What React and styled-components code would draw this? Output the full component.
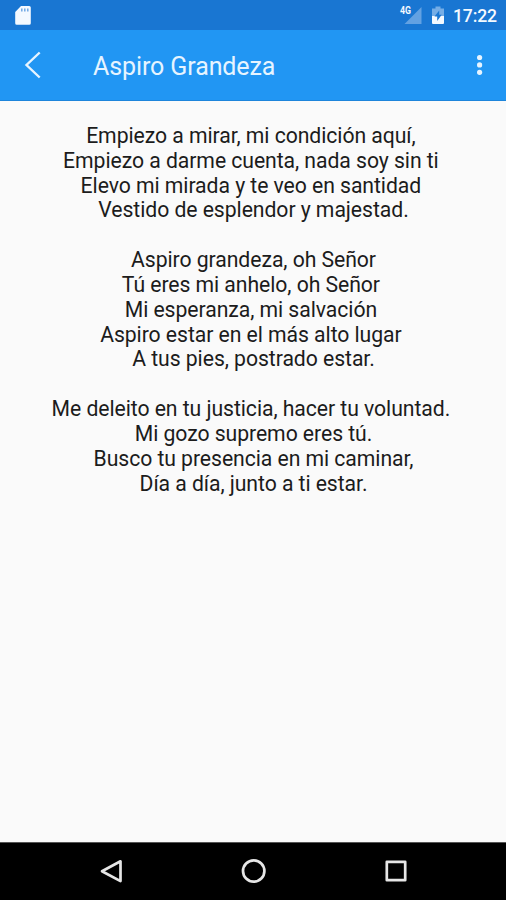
import React from 'react';
import styled, { createGlobalStyle } from 'styled-components';

const GlobalStyle = createGlobalStyle`
  body {
    margin: 0;
    background: #fafafa;
    font-family: Roboto, sans-serif;
  }
`;

const Screen = styled.div`
  display: flex;
  flex-direction: column;
  width: 506px;
  height: 900px;
  overflow: hidden;
  background: #fafafa;
`;

const StatusBar = styled.div`
  display: flex;
  justify-content: space-between;
  height: 30px;
  flex-shrink: 0;
  padding: 0 9px 0 14px;
  background: #1976d2;
  color: #f4f9ff;
`;

const StatusIcons = styled.div`
  display: flex;
`;

const Clock = styled.span`
  width: 44px;
  margin-left: 7px;
  font-size: 17.6px;
  font-weight: 500;
  letter-spacing: -0.15px;
  line-height: 32px;
  white-space: nowrap;
`;

const AppBar = styled.header`
  display: flex;
  align-items: center;
  height: 70px;
  flex-shrink: 0;
  padding: 0 16px 0 20px;
  background: #2196f3;
  border-bottom: 1px solid #1d85db;
  color: #e6f4ff;
`;

const Title = styled.h1`
  flex: 1;
  margin: 4px 0 0 47px;
  font-size: 25px;
  font-weight: 400;
  letter-spacing: -0.1px;
  line-height: 36px;
`;

const IconButton = styled.button`
  display: flex;
  padding: 0;
  border: 0;
  background: none;
  color: inherit;
`;

const Lyrics = styled.main`
  flex: 1;
  padding: 23px 0 0 1px;
  text-align: center;
`;

const Verse = styled.p`
  margin: 0 0 24.83px;
  color: #1c1c1c;
  font-size: 21.2px;
  letter-spacing: -0.06px;
  line-height: 24.83px;
`;

/* trailing spaces in the lyrics count towards the centering */
const Line = styled.span`
  display: block;
  white-space: pre;
`;

const NavBar = styled.nav`
  display: flex;
  justify-content: space-around;
  align-items: center;
  height: 58px;
  flex-shrink: 0;
  padding: 0 40px;
  box-sizing: border-box;
  border-top: 1px solid #555;
  background: #000;
  color: #e6e6e6;
`;

const verses = [
  [
    'Empiezo a mirar, mi condición aquí, ',
    'Empiezo a darme cuenta, nada soy sin ti ',
    'Elevo mi mirada y te veo en santidad ',
    'Vestido de esplendor y majestad.',
  ],
  [
    'Aspiro grandeza, oh Señor',
    'Tú eres mi anhelo, oh Señor ',
    'Mi esperanza, mi salvación ',
    'Aspiro estar en el más alto lugar ',
    'A tus pies, postrado estar.',
  ],
  [
    'Me deleito en tu justicia, hacer tu voluntad. ',
    'Mi gozo supremo eres tú.',
    'Busco tu presencia en mi caminar,',
    'Día a día, junto a ti estar.',
  ],
];

const SdCard = () => (
  <svg width="18" height="30" viewBox="0 0 18 30">
    <path
      d="M7 6h8.200a1.600 1.600 0 0 1 1.600 1.600v15.600a1.600 1.600 0 0 1-1.600 1.600H2.800a1.600 1.600 0 0 1-1.600-1.600V12z"
      fill="currentColor"
    />
    <path d="M7.800 8.500v3M10.800 8.500v3M13.800 8.500v3" stroke="#6fa8e4" strokeWidth="1.500" />
  </svg>
);

const Signal = () => (
  <svg width="23" height="30" viewBox="0 0 23 30">
    <path d="M22.500 7v17h-17z" fill="#63a1e2" />
    <text x="1" y="14" fontSize="10" fontWeight="700" fill="currentColor" textLength="11" lengthAdjust="spacingAndGlyphs">
      4G
    </text>
  </svg>
);

const Battery = () => (
  <svg width="24" height="30" viewBox="0 0 24 30">
    <path d="M10 16V8.500h3.500V6.500h5v2H22V16z" fill="#75ade6" />
    <path d="M10 16h12v7a1 1 0 0 1-1 1H11a1 1 0 0 1-1-1z" fill="currentColor" />
    <path d="M17.200 10.500v4.300h2.500L15.200 21v-4.600h-2.700z" fill="#1976d2" />
  </svg>
);

const BackArrow = () => (
  <svg width="26" height="30" viewBox="0 0 26 30">
    <path d="M19.700 2.500L6.500 15l13.200 12.500" fill="none" stroke="currentColor" strokeWidth="2.400" />
  </svg>
);

const MoreDots = () => (
  <svg width="21" height="30" viewBox="0 0 21 30" fill="currentColor">
    <circle cx="10.600" cy="7.500" r="2.600" />
    <circle cx="10.600" cy="14.900" r="2.600" />
    <circle cx="10.600" cy="22.300" r="2.600" />
  </svg>
);

const navShapes = {
  Back: <path d="M23.500 4.300v19.800L5 14.200z" />,
  Home: <circle cx="14.700" cy="14" r="10.700" />,
  Recents: <rect x="5.800" y="4.800" width="18.400" height="18.400" />,
};

const NavIcon = ({ name }) => (
  <svg
    width="29"
    height="29"
    viewBox="0 0 29 29"
    fill="none"
    stroke="currentColor"
    strokeWidth="2.700"
    strokeLinejoin="round"
  >
    {navShapes[name]}
  </svg>
);

const App = () => {
  return (
    <>
      <GlobalStyle />
      <Screen>
        <StatusBar>
          <SdCard />
          <StatusIcons>
            <Signal />
            <Battery />
            <Clock>17:22</Clock>
          </StatusIcons>
        </StatusBar>
        <AppBar>
          <IconButton aria-label="Atrás">
            <BackArrow />
          </IconButton>
          <Title>Aspiro Grandeza</Title>
          <IconButton aria-label="Más opciones">
            <MoreDots />
          </IconButton>
        </AppBar>
        <Lyrics>
          {verses.map((lines) => (
            <Verse key={lines[0]}>
              {lines.map((line) => (
                <Line key={line}>{line}</Line>
              ))}
            </Verse>
          ))}
        </Lyrics>
        <NavBar>
          {Object.keys(navShapes).map((name) => (
            <IconButton key={name} aria-label={name}>
              <NavIcon name={name} />
            </IconButton>
          ))}
        </NavBar>
      </Screen>
    </>
  );
};

export default App;
